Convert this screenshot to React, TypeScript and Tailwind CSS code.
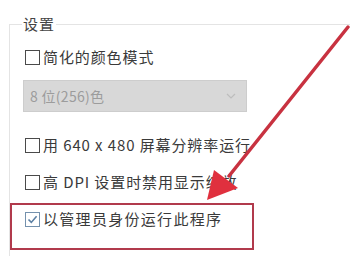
import React from "react";

type RowProps = {
  label: string;
  checked?: boolean;
  className?: string;
};

function CheckRow({ label, checked = false, className = "" }: RowProps) {
  return (
    <div className={`flex h-[20px] items-center ${className}`}>
      <span
        className={`ml-[2px] flex h-[15px] w-[15px] shrink-0 items-center justify-center border-[1.5px] ${
          checked ? "border-[#7491ad]" : "border-[#4a4a4a]"
        }`}
      >
        {checked && (
          <svg width="11" height="11" viewBox="0 0 11 11">
            <path
              d="M1.5 5.5 L4.3 8.4 L9.6 2.2"
              fill="none"
              stroke="#5b7fa3"
              strokeWidth="1.6"
            />
          </svg>
        )}
      </span>
      <span className="ml-[3px] whitespace-nowrap">{label}</span>
    </div>
  );
}

export default function App() {
  return (
    <div className="relative h-[256px] w-[350px] overflow-hidden bg-white font-['Noto_Sans_CJK_SC','Noto_Sans',sans-serif] text-[15px] leading-[20px] tracking-[0.9px] text-[#3a3a3a]">
      {/* group box "设置" */}
      <div className="ml-[9px] mt-[24px] h-[260px] border-l border-t border-[#e4e4e4] pl-[13px]">
        <div className="-mt-[11px] -ml-[1px] w-fit bg-white px-[1px] text-[#444]">
          设置
        </div>

        <CheckRow label="简化的颜色模式" className="mt-[13px]" />

        <div className="mt-[13px] flex h-[32px] w-[224px] items-center justify-between border border-[#cdcdcd] bg-[#d8d8d8] pl-[6px] pr-[10px] text-[14px] tracking-[0.3px] text-[#9c9c9c]">
          <span>8 位(256)色</span>
          <svg width="10" height="6" viewBox="0 0 10 6">
            <path d="M1 1 L5 5 L9 1" fill="none" stroke="#bdbdbd" strokeWidth="1.2" />
          </svg>
        </div>

        <CheckRow label="用 640 x 480 屏幕分辨率运行" className="mt-[23px]" />
        <CheckRow label="高 DPI 设置时禁用显示缩放" className="mt-[17px]" />
        <CheckRow label="以管理员身份运行此程序" checked className="mt-[17px] tracking-[1.3px]" />
      </div>

      {/* red highlight box */}
      <div className="pointer-events-none absolute left-[10px] top-[203px] h-[47px] w-[244px] border-2 border-[#b13a4c]" />

      {/* red arrow */}
      <svg
        className="pointer-events-none absolute left-0 top-0"
        width="350"
        height="256"
        viewBox="0 0 350 256"
      >
        <line x1="348" y1="27" x2="229" y2="176" stroke="#c83240" strokeWidth="3.5" strokeLinecap="round" />
        <polygon points="214,170 238,188 207,200" fill="#e0303e" />
      </svg>
    </div>
  );
}
